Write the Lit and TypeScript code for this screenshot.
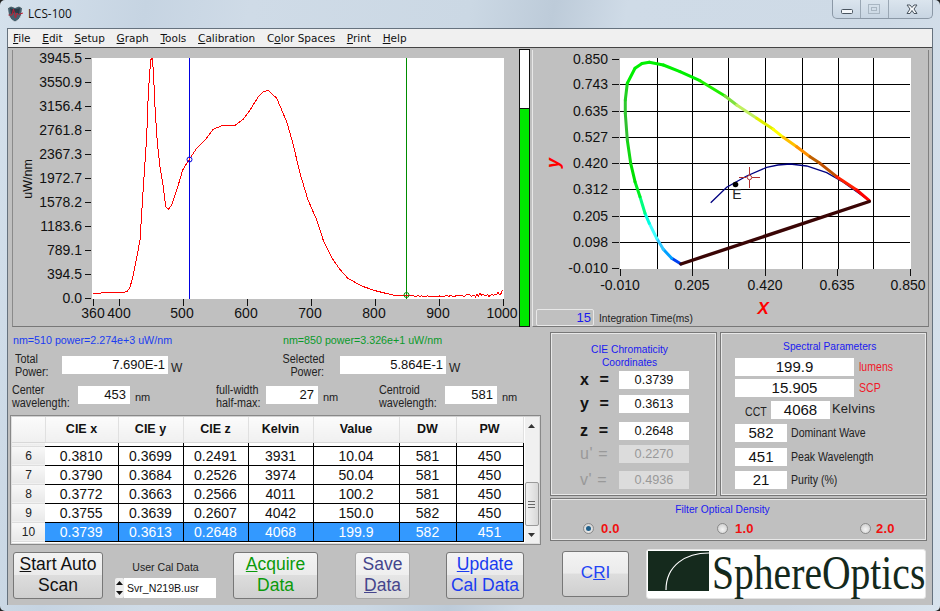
import { LitElement, html, css, svg } from 'lit';
import { customElement } from 'lit/decorators.js';

const SPECTRUM = [
  [93, 294], [103, 292.7], [113, 292.7], [117, 293], [127, 291.7], [130, 287.3], [133.3, 275], [136.7, 258], [140, 240],
  [142.3, 203], [144.3, 173], [146.7, 136.7], [148.3, 93], [150.7, 60], [152, 58], [153.3, 70], [155, 106.7],
  [157.3, 143], [160, 166.7], [162.7, 183], [165.7, 206.7], [168.3, 209.3], [171.7, 205], [175, 195], [178.3, 185],
  [182.7, 170], [189.3, 159.3], [196.7, 148.3], [205, 140], [213.3, 129.3], [221.7, 125.7], [235, 125.3], [243.3, 119.3],
  [250, 110], [258.3, 96.7], [263, 92], [268.3, 90.3], [276.7, 98.3], [286.7, 121.7], [293.3, 145], [300, 173.3], [308, 200],
  [316.8, 220], [323.7, 241.7], [332.3, 258.3], [339, 268.3], [347.8, 278.3], [361.6, 286], [375.3, 290.7], [392.6, 295],
  [406, 295],
];

// noise tail of the spectrum, grows towards 1000 nm
for (let x = 408; x <= 503; x += 1.5) {
  const grow = x > 455 ? (x - 455) / 48 : 0;
  const n = Math.abs(Math.sin(x * 12.9898) * 43758.5453) % 1;
  SPECTRUM.push([x, 297 - n * (1.5 + grow * 6.5)]);
}

const Y_LABELS = ['3945.5', '3550.9', '3156.4', '2761.8', '2367.3', '1972.7', '1578.2', '1183.6', '789.1', '394.5', '0.0'];
const X_LABELS = [[360, 93], [400, 119], [500, 182], [600, 246], [700, 310], [800, 374], [900, 438], [1000, 502]];

const CIE_Y = [[59, '0.850'], [84, '0.743'], [111, '0.635'], [137, '0.527'], [163, '0.420'], [189, '0.312'], [216, '0.205'], [242, '0.098'], [268, '-0.010']];
const CIE_X = [[620, '-0.010'], [692, '0.205'], [765, '0.420'], [837, '0.635'], [908, '0.850']];
const GRID_X = [657, 692, 728, 765, 802, 838, 873];
const GRID_Y = [84, 111, 137, 163, 189, 216, 242];

const LOCUS: [number, number, string][] = [
  [681, 264, '#0000e0'], [671.7, 258.3, '#0040f0'], [663.3, 249.3, '#00a0ff'], [656.7, 238.3, '#30c8ff'], [649.3, 223.3, '#40ffff'],
  [645, 213.3, '#00ffe0'], [640, 196.7, '#00ff80'], [635, 181.7, '#00f020'], [630.7, 163.3, '#00e000'], [627.3, 140, '#10d810'],
  [625.3, 113.3, '#30c030'], [625.3, 100, '#30c830'], [627.3, 83.3, '#20d020'], [635, 68.3, '#00f000'], [642, 63.5, '#00f000'], [649.3, 62.3, '#00f000'],
  [663.3, 65, '#00f000'], [680, 71.7, '#00f000'], [700, 80.7, '#00f000'], [725, 96, '#20f000'], [736.7, 105, '#80e040'],
  [756.7, 118.3, '#c0f060'], [773.3, 129.3, '#e0f000'], [783.3, 137.3, '#ffff00'], [796.7, 146.7, '#ffc000'], [810, 156.7, '#ff9000'],
  [820, 163.3, '#c06000'], [836.7, 176.7, '#c05000'], [856.7, 190, '#ff2000'], [869.3, 200.7, '#ff0000'],
];

const PLANCK = '710.7,202.7 726.7,187.3 746.7,176 766.7,167.3 778,165 790,164 806.7,166 826.7,172.7 843.3,182.3 868.3,200';

const ROWS = [
  ['6', '0.3810', '0.3699', '0.2491', '3931', '10.04', '581', '450'],
  ['7', '0.3790', '0.3684', '0.2526', '3974', '50.04', '581', '450'],
  ['8', '0.3772', '0.3663', '0.2566', '4011', '100.2', '581', '450'],
  ['9', '0.3755', '0.3639', '0.2607', '4042', '150.0', '582', '450'],
  ['10', '0.3739', '0.3613', '0.2648', '4068', '199.9', '582', '451'],
];

@customElement('app-root')
export class AppRoot extends LitElement {
  static styles = css`
    :host {
      display: block;
      width: 940px;
      height: 611px;
      background: #222;
      font-family: 'Liberation Sans', Arial, sans-serif;
      color: #111;
    }
    .window {
      width: 940px;
      height: 611px;
      box-sizing: border-box;
      border-radius: 5px;
      overflow: hidden;
      display: flex;
      flex-direction: column;
      background: linear-gradient(100deg, #d5e1ec 0%, #c6d4e2 14%, #cfdbe7 24%, #cbd8e4 45%, #bdcbd9 53%, #cfdbe7 60%, #cedae6 85%, #d8e3ed 100%);
    }
    .titlebar {
      height: 28px;
      flex: none;
      display: flex;
      align-items: flex-start;
      padding-left: 6px;
    }
    .app-icon { width: 18px; height: 18px; margin-top: 5px; }
    .title {
      margin: 5px 0 0 4px;
      font: 11.7px/16px 'Open Sans', sans-serif;
    }
    .caption {
      margin: 0 7px 0 auto;
      width: 101px;
      height: 19px;
      box-sizing: border-box;
      border: 1px solid #8b98a6;
      border-top: none;
      border-radius: 0 0 5px 5px;
      background: linear-gradient(#dbe5ee, #c8d5e2);
    }
    .caption svg { display: block; }
    .client {
      flex: 1;
      margin: 0 7px 6px 7px;
      background: #c0c0c0;
      border: 1px solid #66727e;
      border-bottom: none;
      display: flex;
      flex-direction: column;
      box-sizing: border-box;
      min-height: 0;
    }
    .menu {
      height: 19px;
      box-sizing: border-box;
      flex: none;
      display: flex;
      align-items: center;
      gap: 11.7px;
      padding-left: 5px;
      background: #f0f0f0;
      border-bottom: 1px solid #444;
      font: 10.5px 'DejaVu Sans', sans-serif;
      color: #111;
    }
    .top {
      display: flex;
      height: 277px;
      flex: none;
      margin-top: 2px;
      padding-left: 4px;
    }
    .plot {
      display: block;
      width: 507px;
      height: 277px;
      border-bottom: 1px solid #777;
      border-left: 1px solid #8a8a8a;
      box-sizing: border-box;
    }
    .level {
      width: 11px;
      height: 278px;
      margin-top: -1px;
      box-sizing: border-box;
      border: 1px solid #111;
      background: linear-gradient(#fff 58px, #111 58px, #111 59px, #00e800 59px);
    }
    .cie {
      width: 397px;
      margin-left: 2px;
      border-left: 1px solid #e8e8e8;
      border-right: 1px solid #808080;
      border-bottom: 1px solid #777;
      box-sizing: border-box;
      display: flex;
      flex-direction: column;
    }
    .cie svg { display: block; width: 395px; height: 255px; flex: none; }
    .cie-foot {
      display: flex;
      align-items: flex-end;
      padding-left: 3px;
      height: 21px;
    }
    .int-box {
      width: 58px;
      height: 17px;
      box-sizing: border-box;
      border: 1px solid #e8e8e8;
      border-radius: 2px;
      color: #1a1aee;
      font-size: 13px;
      line-height: 16px;
      text-align: right;
      padding-right: 2px;
    }
    .int-label { margin-left: 5px; font-size: 11.5px; line-height: 15px; color: #222; transform: scaleX(0.89); transform-origin: left center; white-space: nowrap; }
    .axis-x {
      align-self: flex-start;
      margin: -6px 0 0 53px;
      color: #f00;
      font: italic bold 17px/20px 'Liberation Sans', sans-serif;
    }
    .bottom { display: flex; flex: 1; min-height: 0; }
    .left {
      width: 542px;
      flex: none;
      box-sizing: border-box;
      padding-top: 6px;
    }
    .cursors { display: flex; height: 14px; font-size: 11.5px; line-height: 14px; padding-left: 5px; }
    .cursors span { display: block; transform: scaleX(0.93); transform-origin: left center; white-space: nowrap; }
    .cursors span:first-child { width: 290px; margin-right: -20px; color: #1a3cf0; }
    .cursors span:last-child { color: #0a9a2a; }
    .fields { display: flex; align-items: flex-start; height: 18px; font-size: 12px; }
    .fields.power { margin-top: 9px; padding-left: 7px; }
    .fields.power .g1 { width: 268px; }
    .fields.spec { margin-top: 12px; padding-left: 4px; }
    .fields.spec .g1 { width: 204px; }
    .fields.spec .g2 { width: 163px; }
    .group { display: flex; align-items: flex-start; }
    .lab { line-height: 13px; white-space: nowrap; transform: scaleX(0.9); transform-origin: left top; color: #222; }
    .power .lab { margin-top: -3px; width: 47px; }
    .power .g2 .lab { text-align: right; margin-left: -5px; padding-right: 16px; width: 46px; transform-origin: 46px 0; }
    .spec .lab { margin-top: -2px; width: 66px; }
    .spec .g2 .lab { width: 50px; }
    .box {
      background: #fff;
      height: 18px;
      line-height: 18px;
      text-align: right;
      box-sizing: border-box;
      padding-right: 3px;
      font-size: 13px;
      color: #111;
    }
    .power .box { width: 106px; }
    .spec .box { width: 52px; padding-right: 4px; }
    .unit { font-size: 12px; margin: 5px 0 0 3px; color: #222; }
    .spec .unit { margin: 5px 0 0 5px; font-size: 11px; }
    .table-wrap {
      margin: 11px 0 0 2px;
      width: 531px;
      height: 130px;
      box-sizing: border-box;
      display: flex;
      background: #fff;
      border: 2px solid #dedede;
      border-top-color: #d0d0d0;
      outline: 1px solid #888;
      outline-offset: -1px;
    }
    table {
      width: 511px;
      flex: none;
      border-collapse: collapse;
      table-layout: fixed;
      align-self: flex-start;
      font-size: 14px;
    }
    th {
      height: 25px;
      padding: 0;
      box-sizing: border-box;
      font-size: 12.5px;
      font-weight: bold;
      color: #111;
      background: linear-gradient(#fbfbfb, #f0f0f0);
      border-right: 1px solid #e0e0e0;
      border-bottom: 1px solid #d8d8d8;
    }
    th:nth-child(1) { width: 33px; }
    th:nth-child(2) { width: 73px; }
    th:nth-child(3), th:nth-child(4), th:nth-child(5) { width: 65px; }
    th:nth-child(6) { width: 86px; }
    th:nth-child(7) { width: 57px; }
    th:nth-child(8) { width: 67px; }
    .sliver td { height: 4px; box-sizing: border-box; padding: 0; font-size: 0; border: none; border-right: 1px solid #000; background: #fff; }
    td {
      height: 19px;
      box-sizing: border-box;
      padding: 0;
      text-align: center;
      border: 1px solid #000;
      border-left: none;
      color: #111;
    }
    td.rh, .sliver td.rh {
      background: linear-gradient(#f8f8f8, #e8e8e8);
      border: none;
      border-bottom: 1px solid #ddd;
      font-size: 12px;
      color: #222;
    }
    tr.sel td:not(.rh) { background: #3399ff; color: #fff; }
    .scroll {
      width: 16px;
      margin-left: 1px;
      background: #f0f0f0;
      display: flex;
      flex-direction: column;
      align-items: center;
    }
    .arrow { height: 17px; flex: none; display: flex; align-items: center; justify-content: center; }
    .track { flex: 1; width: 100%; display: flex; flex-direction: column; justify-content: flex-end; }
    .thumb {
      height: 44px;
      box-sizing: border-box;
      border: 1px solid #9a9a9a;
      border-radius: 2px;
      background: linear-gradient(90deg, #f2f2f2, #d8d8d8);
      display: flex;
      align-items: center;
      justify-content: center;
    }
    .actions {
      margin: 7px 0 0 5px;
      display: flex;
      align-items: flex-start;
    }
    .btn {
      height: 47px;
      flex: none;
      box-sizing: border-box;
      border: 1px solid #777;
      border-radius: 3px;
      padding: 1px 0 0;
      background: linear-gradient(#f3f3f3 0, #ebebeb 48%, #dddddd 50%, #cfcfcf 100%);
      font: 17.5px/21px 'Liberation Sans', sans-serif;
      color: #111;
      text-align: center;
    }
    .start { width: 90px; }
    .acquire { width: 85px; margin-left: 17px; color: #0a9a0a; }
    .save { width: 55px; margin-left: 37px; color: #45458c; border-color: #aaa; background: linear-gradient(#f6f6f6, #efefef 48%, #e6e6e6 50%, #dcdcdc); }
    .update { width: 78px; margin-left: 36px; color: #1a3cf0; }
    .cal { width: 101px; margin-left: 12px; font-size: 11.5px; flex: none; }
    .cal-title { text-align: center; line-height: 14px; margin: 8px 0 0; transform: scaleX(0.92); color: #222; }
    .cal-input { display: flex; align-items: stretch; margin-top: 4px; height: 20px; }
    .spin { width: 9px; display: flex; flex-direction: column; align-items: center; justify-content: space-around; background: #eee; border-radius: 2px; }
    .cal-value { width: 92px; background: #fff; padding-left: 3px; box-sizing: border-box; line-height: 20px; white-space: nowrap; }
    .cal-value span { display: block; transform: scaleX(0.92); transform-origin: left center; }
    .right {
      width: 377px;
      padding-top: 5px;
      display: flex;
      flex-direction: column;
    }
    .panels { display: flex; gap: 3px; height: 164px; flex: none; }
    .panel {
      margin: 0;
      box-sizing: border-box;
      border: 1px solid #777;
      outline: 1px solid #e8e8e8;
      outline-offset: -2px;
    }
    .panel-title { color: #1a1af0; font-size: 11.5px; text-align: center; line-height: 13px; transform: scaleX(0.89); }
    .coord { width: 167px; padding-top: 10px; }
    .coord .panel-title { padding-right: 9px; }
    .coord-row { display: flex; align-items: center; height: 18px; margin-top: 6px; }
    .coord-row:nth-child(2) { margin-top: 2px; }
    .coord-row:nth-child(4) { margin-top: 9px; }
    .coord-row:nth-child(5) { margin-top: 5px; }
    .coord-row:nth-child(6) { margin-top: 8px; }
    .sym {
      width: 39px;
      padding-left: 29px;
      font-size: 16px;
      font-weight: bold;
      letter-spacing: 0.6px;
      white-space: pre;
      color: #111;
    }
    .off .sym { font-weight: normal; color: #999; }
    .val { background: #fff; height: 18px; line-height: 18px; text-align: center; font-size: 12.7px; color: #111; flex: none; }
    .coord .val { width: 70px; }
    .off .val { color: #999; background: #dcdcdc; }
    .params { width: 207px; padding: 7px 0 0 14px; }
    .params .panel-title { margin-left: -14px; padding-left: 14px; padding-right: 0; }
    .param-row { display: flex; align-items: center; height: 18px; margin-top: 3px; font-size: 12px; color: #222; white-space: nowrap; }
    .param-row:nth-child(2) { margin-top: 5px; }
    .param-row:nth-child(4) { margin-top: 4px; }
    .param-row:nth-child(5) { margin-top: 5px; }
    .param-row:nth-child(6) { margin-top: 6px; }
    .param-row:nth-child(7) { margin-top: 5px; }
    .param-row .val { font-size: 15px; }
    .wide { width: 119px; }
    .mid { width: 59px; }
    .short { width: 52px; }
    .narrow { display: inline-block; transform: scaleX(0.88); transform-origin: left center; }
    .red { color: #f01828; margin-left: 5px; }
    .cct { margin: 3px 0 0 10px; width: 26px; }
    .kelvins { margin: -4px 0 0 2px; font-size: 13px; letter-spacing: 0.2px; }
    .plain { margin-left: 4px; }
    .filter { height: 43px; margin-top: 2px; padding-top: 4px; flex: none; }
    .filter .panel-title { padding-right: 36px; }
    .radios { display: flex; margin-top: 5px; padding-left: 32px; }
    .radio-item { display: flex; align-items: center; gap: 7px; color: #f01010; font-size: 13px; font-weight: bold; letter-spacing: 0.2px; }
    .radio-item:nth-child(1) { width: 134px; }
    .radio-item:nth-child(2) { width: 143px; }
    .radio-item:nth-child(3) { gap: 5px; }
    .dot {
      width: 11px;
      height: 11px;
      box-sizing: border-box;
      border-radius: 50%;
      border: 1px solid #8a8a8a;
      background: radial-gradient(circle at 50% 60%, #f4f4f4, #c8c8c8);
      display: flex;
      align-items: center;
      justify-content: center;
    }
    .dot.on::after { content: ''; width: 5px; height: 5px; border-radius: 50%; background: #1f5f8a; }
    .brand { display: flex; margin-top: 8px; align-items: flex-start; }
    .cri { width: 67px; height: 46px; margin: 2px 0 0 12px; padding: 0; line-height: 42px; color: #1f44f5; font-size: 17px; background: linear-gradient(#f3f3f3, #ebebeb 48%, #dddddd 50%, #cfcfcf); }
    .logo {
      width: 280px;
      height: 50px;
      margin-left: 17px;
      box-sizing: border-box;
      background: #fff;
      border: 1px solid #e4e4e4;
      border-radius: 3px;
      display: flex;
      padding: 1px 0 0 1px;
      flex: none;
    }
    .logo svg { width: 61px; height: 40px; flex: none; }
    .logo-text {
      margin-left: 3px;
      width: 213px;
      font: 48px/44px 'Liberation Serif', serif;
      color: #14291c;
      white-space: nowrap;
      transform: scaleX(0.825);
      transform-origin: left top;
    }
  `;

  private spectrum() {
    return svg`
      <svg class="plot" viewBox="13 50 506 276" xmlns="http://www.w3.org/2000/svg">
        <rect x="92" y="58" width="412" height="241" fill="#fff"/>
        ${Y_LABELS.map((t, i) => {
          const y = 58 + i * 24;
          return svg`<line x1="85" x2="91" y1=${y + 0.5} y2=${y + 0.5} stroke="#111"/>
            <text x="82" y=${y + 5} text-anchor="end" font-size="14" fill="#111">${t}</text>`;
        })}
        ${X_LABELS.map(([nm, lx]) => {
          const x = Math.round(93 + (nm - 360) * 0.64) + 0.5;
          return svg`<line x1=${x} x2=${x} y1="299" y2="306" stroke="#111"/>
            <text x=${lx} y="318" text-anchor="middle" font-size="14" fill="#111">${nm}</text>`;
        })}
        <text transform="translate(32 179) rotate(-90)" text-anchor="middle" font-size="12.5" fill="#111">uW/nm</text>
        <line x1="189.5" x2="189.5" y1="58" y2="299" stroke="#0000e0"/>
        <line x1="406.5" x2="406.5" y1="58" y2="299" stroke="#008c00"/>
        <polyline points=${SPECTRUM.map((p) => p.join(',')).join(' ')} fill="none" stroke="#f00" stroke-width="1" shape-rendering="crispEdges"/>
        <circle cx="189.5" cy="159.5" r="2.5" fill="none" stroke="#0000e0"/>
        <circle cx="406.5" cy="295" r="2.5" fill="none" stroke="#008c00"/>
      </svg>`;
  }

  private chromaticity() {
    return svg`
      <svg viewBox="533 50 395 255" xmlns="http://www.w3.org/2000/svg">
        <rect x="620" y="58" width="291" height="211" fill="#fff"/>
        <g shape-rendering="crispEdges">
          ${GRID_X.map((x) => svg`<line x1=${x + 0.5} x2=${x + 0.5} y1="58" y2="269" stroke="#000" stroke-width="1"/>`)}
          ${GRID_Y.map((y) => svg`<line x1="620" x2="910" y1=${y + 0.5} y2=${y + 0.5} stroke="#000" stroke-width="1"/>`)}
        </g>
        ${CIE_Y.map(([y, t]) => svg`<line x1="612" x2="619" y1=${(y as number) + 0.5} y2=${(y as number) + 0.5} stroke="#111"/>
          <text x="608" y=${(y as number) + 5} text-anchor="end" font-size="14" fill="#111">${t}</text>`)}
        ${CIE_X.map(([x, t], i) => svg`<line x1=${(i === 4 ? 910 : (x as number)) + 0.5} x2=${(i === 4 ? 910 : (x as number)) + 0.5} y1="269" y2="276" stroke="#111"/>
          <text x=${x} y="290" text-anchor="middle" font-size="14" fill="#111">${t}</text>`)}
        <text transform="translate(559 163) rotate(-90)" text-anchor="middle" font-size="18" font-weight="bold" font-style="italic" fill="#f00">y</text>
        <polyline points=${PLANCK} fill="none" stroke="#000080" stroke-width="1.3"/>
        ${LOCUS.slice(1).map((p, i) => svg`<line x1=${LOCUS[i][0]} y1=${LOCUS[i][1]} x2=${p[0]} y2=${p[1]} stroke=${p[2]} stroke-width="3" stroke-linecap="round"/>`)}
        <line x1="869.3" y1="201.5" x2="681" y2="264" stroke="#3a0505" stroke-width="3.4" stroke-linecap="round"/>
        <circle cx="735.5" cy="184.5" r="2.8" fill="#000"/>
        <text x="737" y="199" text-anchor="middle" font-size="14" fill="#222">E</text>
        <g stroke="#b03030" fill="none">
          <line x1="739" x2="746.5" y1="177.5" y2="177.5"/><line x1="752" x2="760" y1="177.5" y2="177.5"/>
          <line x1="749.5" x2="749.5" y1="167" y2="175"/><line x1="749.5" x2="749.5" y1="180" y2="188"/>
          <circle cx="749.5" cy="177.5" r="2.2"/>
        </g>
      </svg>`;
  }

  private table() {
    return html`
      <table>
        <thead>
          <tr><th></th><th>CIE x</th><th>CIE y</th><th>CIE z</th><th>Kelvin</th><th>Value</th><th>DW</th><th>PW</th></tr>
        </thead>
        <tbody>
          <tr class="sliver"><td class="rh"></td><td></td><td></td><td></td><td></td><td></td><td></td><td></td></tr>
          ${ROWS.map((r, i) => html`<tr class=${i === 4 ? 'sel' : ''}>
            <td class="rh">${r[0]}</td>${r.slice(1).map((c) => html`<td>${c}</td>`)}
          </tr>`)}
        </tbody>
      </table>`;
  }

  render() {
    return html`
      <div class="window">
        <div class="titlebar">
          <svg class="app-icon" viewBox="0 0 18 18">
            <path d="M1.5 3 L5 1 L9 2.5 L13 1 L16.5 3 L15.5 10 Q14 15 9 17 Q4 15 2.5 10 Z" fill="#46606e" stroke="#e8eef3" stroke-width="0.8"/>
            <path d="M4 3 Q9 5 14 3 L13 9 Q9 6 5 9 Z" fill="#2c3c48"/>
            <path d="M2.5 10 L6 10 L7.5 4 L9.5 13 L11 8 L12.5 9.5 L17 8" fill="none" stroke="#c02034" stroke-width="1"/>
          </svg>
          <div class="title">LCS-100</div>
          <div class="caption">
            <svg width="99" height="18" viewBox="832 0 99 18">
              <line x1="859.5" x2="859.5" y1="0" y2="18" stroke="#9aa7b4"/>
              <line x1="887.5" x2="887.5" y1="0" y2="18" stroke="#9aa7b4"/>
              <rect x="840.5" y="9.5" width="11" height="4" rx="1" fill="#f4f7fa" stroke="#4a5560"/>
              <rect x="867.5" y="4.5" width="11" height="9" fill="none" stroke="#a9b6c2"/>
              <rect x="870.5" y="7.5" width="5" height="3" fill="none" stroke="#a9b6c2"/>
              <path d="M906 5 L909 5 L911 7.5 L913 5 L916 5 L913 9 L916 13.5 L913 13.5 L911 10.5 L909 13.5 L906 13.5 L909 9 Z" fill="#f6f8fa" stroke="#4a5560"/>
            </svg>
          </div>
        </div>
        <div class="client">
          <div class="menu">
            <span><u>F</u>ile</span><span><u>E</u>dit</span><span><u>S</u>etup</span><span><u>G</u>raph</span>
            <span><u>T</u>ools</span><span><u>C</u>alibration</span><span>C<u>o</u>lor Spaces</span><span><u>P</u>rint</span><span><u>H</u>elp</span>
          </div>
          <div class="top">
            ${this.spectrum()}
            <div class="level"></div>
            <div class="cie">
              ${this.chromaticity()}
              <div class="cie-foot">
                <div class="int-box">15</div>
                <div class="int-label">Integration Time(ms)</div>
                <div class="axis-x">X</div>
              </div>
            </div>
          </div>
          <div class="bottom">
            <div class="left">
              <div class="cursors"><span>nm=510 power=2.274e+3 uW/nm</span><span>nm=850 power=3.326e+1 uW/nm</span></div>
              <div class="fields power">
                <div class="group g1"><div class="lab">Total<br/>Power:</div><div class="box">7.690E-1</div><div class="unit">W</div></div>
                <div class="group g2"><div class="lab">Selected<br/>Power:</div><div class="box">5.864E-1</div><div class="unit">W</div></div>
              </div>
              <div class="fields spec">
                <div class="group g1"><div class="lab">Center<br/>wavelength:</div><div class="box">453</div><div class="unit">nm</div></div>
                <div class="group g2"><div class="lab">full-width<br/>half-max:</div><div class="box">27</div><div class="unit">nm</div></div>
                <div class="group"><div class="lab">Centroid<br/>wavelength:</div><div class="box">581</div><div class="unit">nm</div></div>
              </div>
              <div class="table-wrap">
                ${this.table()}
                <div class="scroll">
                  <div class="arrow"><svg width="7" height="4"><path d="M3.5 0 L7 4 L0 4 Z" fill="#333"/></svg></div>
                  <div class="track">
                    <div class="thumb"><svg width="7" height="7"><path d="M0 .5H7M0 3.5H7M0 6.5H7" stroke="#666"/></svg></div>
                  </div>
                  <div class="arrow"><svg width="7" height="4"><path d="M0 0 L7 0 L3.5 4 Z" fill="#333"/></svg></div>
                </div>
              </div>
              <div class="actions">
                <div class="btn start"><u>S</u>tart Auto<br/>Scan</div>
                <div class="cal">
                  <div class="cal-title">User Cal Data</div>
                  <div class="cal-input">
                    <div class="spin">
                      <svg width="7" height="4"><path d="M3.5 0 L7 4 L0 4 Z" fill="#111"/></svg>
                      <svg width="7" height="4"><path d="M0 0 L7 0 L3.5 4 Z" fill="#111"/></svg>
                    </div>
                    <div class="cal-value"><span>Svr_N219B.usr</span></div>
                  </div>
                </div>
                <div class="btn acquire"><u>A</u>cquire<br/>Data</div>
                <div class="btn save">Save<br/><u>D</u>ata</div>
                <div class="btn update"><u>U</u>pdate<br/>Cal Data</div>
              </div>
            </div>
            <div class="right">
              <div class="panels">
                <div class="panel coord">
                  <div class="panel-title">CIE Chromaticity<br/>Coordinates</div>
                  <div class="coord-row"><span class="sym">x  =</span><div class="val">0.3739</div></div>
                  <div class="coord-row"><span class="sym">y  =</span><div class="val">0.3613</div></div>
                  <div class="coord-row"><span class="sym">z  =</span><div class="val">0.2648</div></div>
                  <div class="coord-row off"><span class="sym">u' =</span><div class="val">0.2270</div></div>
                  <div class="coord-row off"><span class="sym">v' =</span><div class="val">0.4936</div></div>
                </div>
                <div class="panel params">
                  <div class="panel-title">Spectral Parameters</div>
                  <div class="param-row"><div class="val wide">199.9</div><span class="red narrow">lumens</span></div>
                  <div class="param-row"><div class="val wide">15.905</div><span class="red narrow">SCP</span></div>
                  <div class="param-row"><span class="cct narrow">CCT</span><div class="val mid">4068</div><span class="kelvins">Kelvins</span></div>
                  <div class="param-row"><div class="val short">582</div><span class="plain narrow">Dominant Wave</span></div>
                  <div class="param-row"><div class="val short">451</div><span class="plain narrow">Peak Wavelength</span></div>
                  <div class="param-row"><div class="val short">21</div><span class="plain narrow">Purity (%)</span></div>
                </div>
              </div>
              <div class="panel filter">
                <div class="panel-title">Filter Optical Density</div>
                <div class="radios">
                  <div class="radio-item"><span class="dot on"></span>0.0</div>
                  <div class="radio-item"><span class="dot"></span>1.0</div>
                  <div class="radio-item"><span class="dot"></span>2.0</div>
                </div>
              </div>
              <div class="brand">
                <div class="btn cri">C<u>R</u>I</div>
                <div class="logo">
                  <svg viewBox="0 0 61 40">
                    <rect width="61" height="40" fill="#152a1d"/>
                    <path d="M61 2 C38 2 18 14 18 39" fill="none" stroke="#fff" stroke-width="1.2"/>
                  </svg>
                  <div class="logo-text">SphereOptics</div>
                </div>
              </div>
            </div>
          </div>
        </div>
      </div>
    `;
  }
}

declare global {
  interface HTMLElementTagNameMap {
    'app-root': AppRoot;
  }
}
